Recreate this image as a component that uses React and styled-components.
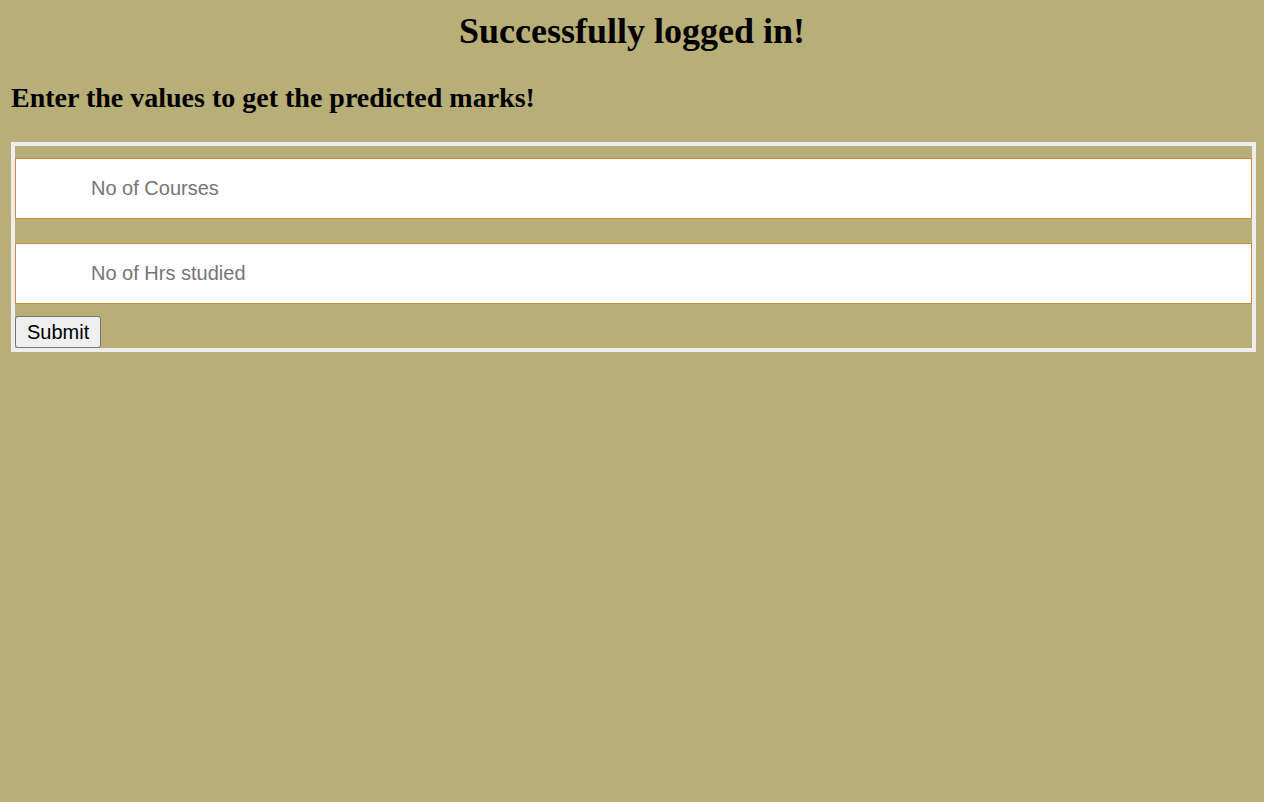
import React from 'react';
import styled, { createGlobalStyle } from 'styled-components';

const GlobalStyle = createGlobalStyle`
  html, body {
    background: #b7ae78;
  }
  body {
    margin: 8px;
    font-family: "Liberation Serif", "Times New Roman", serif;
    color: #000;
  }
`;

const Title = styled.h1`
  margin: 2px 0 0;
  font-size: 36px;
  font-weight: bold;
  text-align: center;
`;

const SubTitle = styled.h2`
  margin: 30px 0 0 3px;
  font-size: 28px;
  font-weight: bold;
`;

const Form = styled.form`
  display: flex;
  flex-direction: column;
  align-items: flex-start;
  margin: 28px 0 0 3px;
  border: 4px solid #eeeeee;
  padding: 12px 0 0;
`;

const Field = styled.input`
  box-sizing: border-box;
  width: 100%;
  height: 61px;
  margin-bottom: ${(p) => (p.last ? '12px' : '24px')};
  padding: 0 0 0 75px;
  border: 1px solid #d4883f;
  background: #fff;
  font-family: "Liberation Sans", Arial, sans-serif;
  font-size: 20px;
  color: #000;
  outline: none;
  &::placeholder {
    color: #757575;
  }
`;

const SubmitButton = styled.button`
  box-sizing: border-box;
  height: 32px;
  padding: 0 11px;
  border: 1px solid #767676;
  border-radius: 3px;
  background: #efefef;
  font-family: "Liberation Sans", Arial, sans-serif;
  font-size: 20px;
  color: #000;
`;

export default function App() {
  return (
    <>
      <GlobalStyle />
      <Title>Successfully logged in!</Title>
      <SubTitle>Enter the values to get the predicted marks!</SubTitle>
      <Form onSubmit={(e) => e.preventDefault()}>
        <Field type="text" placeholder="No of Courses" />
        <Field type="text" placeholder="No of Hrs studied" last />
        <SubmitButton type="submit">Submit</SubmitButton>
      </Form>
    </>
  );
}
